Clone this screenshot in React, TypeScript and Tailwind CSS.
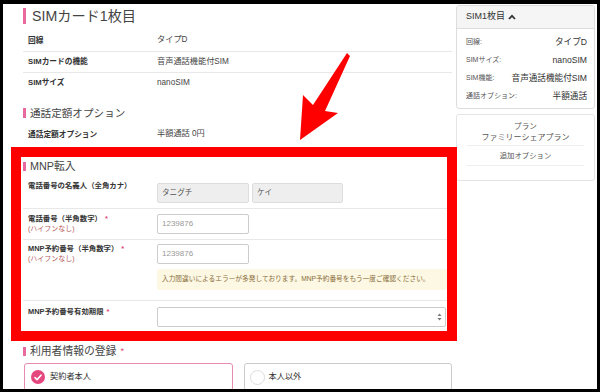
import React from "react";

function Bar({ h }: { h: string }) {
  return <span className={"block w-[3px] bg-[#e8699e] shrink-0 " + h} />;
}

function InfoRow({ label, value, top }: { label: string; value: string; top?: boolean }) {
  return (
    <div className={"flex items-center h-[21px] " + (top ? "border-t border-[#e8e8e8]" : "")}>
      <div className="w-[134px] pl-[5px] text-[7.7px] font-bold text-[#333]">{label}</div>
      <div className="text-[8.2px] text-[#444]">{value}</div>
    </div>
  );
}

function SideRow({ label, value }: { label: string; value: string }) {
  return (
    <div className="flex items-center justify-between h-[18px]">
      <span className="text-[7px] text-[#555]">{label}</span>
      <span className="text-[8.6px] text-[#333]">{value}</span>
    </div>
  );
}

export default function App() {
  return (
    <div className="w-[600px] h-[392px] bg-black pt-[4px] pl-[3px] pr-[3px] pb-[3px] [font-family:'Liberation_Sans','Noto_Sans_CJK_JP',sans-serif]">
      <div className="relative w-full h-full bg-white overflow-hidden flex">
        {/* main column */}
        <div className="w-[453px] shrink-0 pl-[20px] pr-[4px]">
          <div className="h-[24px] flex items-center">
            <Bar h="h-[16px]" />
            <span className="ml-[6px] text-[14.2px] leading-none text-[#444]">SIMカード1枚目</span>
          </div>
          <div className="mt-[2px]">
            <InfoRow label="回線" value="タイプD" />
            <InfoRow label="SIMカードの機能" value="音声通話機能付SIM" top />
            <InfoRow label="SIMサイズ" value="nanoSIM" top />
          </div>

          <div className="mt-[10px] h-[20px] flex items-center">
            <Bar h="h-[10px]" />
            <span className="ml-[4px] text-[10.6px] leading-none text-[#444]">通話定額オプション</span>
          </div>
          <div className="mt-[1px]">
            <InfoRow label="通話定額オプション" value="半額通話 0円" />
          </div>

          <div className="mt-[11px] h-[20px] flex items-center">
            <Bar h="h-[9px]" />
            <span className="ml-[4px] text-[10.8px] leading-none text-[#444]">MNP転入</span>
          </div>

          {/* MNP row 1 */}
          <div className="flex h-[32px] pt-[7px]">
            <div className="w-[134px] pl-[5px] -mt-[2px] text-[7.4px] leading-[10px] font-bold text-[#333]">
              電話番号の名義人（全角カナ）
            </div>
            <div className="flex gap-[3px]">
              <div className="w-[92px] h-[20px] bg-[#eeeeee] border border-[#dddddd] rounded-[2px] pl-[4px] flex items-center text-[7.6px] text-[#555]">
                タニグチ
              </div>
              <div className="w-[91px] h-[20px] bg-[#eeeeee] border border-[#dddddd] rounded-[2px] pl-[4px] flex items-center text-[7.6px] text-[#555]">
                ケイ
              </div>
            </div>
          </div>

          {/* MNP row 2 */}
          <div className="flex h-[31px] pt-[5px] border-t border-[#e8e8e8]">
            <div className="w-[134px] pl-[5px]">
              <div className="text-[7.4px] leading-[10px] font-bold text-[#333]">
                電話番号（半角数字）<span className="ml-[3px] text-[#e0457b]">*</span>
              </div>
              <div className="text-[7px] leading-[10px] text-[#b35a5a]">(ハイフンなし)</div>
            </div>
            <div className="w-[92px] h-[20px] bg-white border border-[#cccccc] rounded-[2px] pl-[4px] flex items-center text-[8px] text-[#999]">
              1239876
            </div>
          </div>

          {/* MNP row 3 */}
          <div className="flex h-[61px] pt-[4px] border-t border-[#e8e8e8]">
            <div className="w-[134px] pl-[5px] shrink-0">
              <div className="text-[7.4px] leading-[10px] font-bold text-[#333]">
                MNP予約番号（半角数字）<span className="ml-[3px] text-[#e0457b]">*</span>
              </div>
              <div className="text-[7px] leading-[10px] text-[#b35a5a]">(ハイフンなし)</div>
            </div>
            <div className="flex-1">
              <div className="w-[92px] h-[20px] bg-white border border-[#cccccc] rounded-[2px] pl-[4px] flex items-center text-[8px] text-[#999]">
                1239876
              </div>
              <div className="mt-[5px] w-[290px] h-[21px] bg-[#fcf8e3] rounded-[2px] pl-[5px] flex items-center text-[6.7px] text-[#8a6d3b] whitespace-nowrap">
                入力間違いによるエラーが多発しております。MNP予約番号をもう一度ご確認ください。
              </div>
            </div>
          </div>

          {/* MNP row 4 */}
          <div className="flex h-[33px] pt-[6px] border-t border-[#e8e8e8]">
            <div className="w-[134px] pl-[5px] shrink-0 text-[7.4px] leading-[10px] font-bold text-[#333]">
              MNP予約番号有効期限<span className="ml-[3px] text-[#e0457b]">*</span>
            </div>
            <div className="w-[289px] h-[20px] bg-white border border-[#cccccc] rounded-[2px] flex items-center justify-end pr-[3px]">
              <svg width="5" height="8" viewBox="0 0 5 8">
                <path d="M2.5 0.5 L4.5 3 L0.5 3 Z" fill="#777" />
                <path d="M2.5 7.5 L4.5 5 L0.5 5 Z" fill="#777" />
              </svg>
            </div>
          </div>

          <div className="mt-[8px] h-[20px] flex items-center">
            <Bar h="h-[9px]" />
            <span className="ml-[4px] text-[10.8px] leading-none text-[#444]">利用者情報の登録</span>
            <span className="ml-[4px] text-[9px] leading-none text-[#e0457b]">*</span>
          </div>
          <div className="mt-[2px] ml-[1px] grid grid-cols-2 gap-[11px]">
            <div className="h-[28px] border border-[#e88bb0] rounded-[3px] flex items-center pl-[6px]">
              <span className="w-[14px] h-[14px] rounded-full bg-[#e5487f] flex items-center justify-center">
                <svg width="8" height="7" viewBox="0 0 8 7">
                  <path d="M1 3.6 L3.1 5.6 L7 1.2" stroke="white" strokeWidth="1.6" fill="none" strokeLinecap="round" strokeLinejoin="round" />
                </svg>
              </span>
              <span className="ml-[5px] text-[8.2px] text-[#333]">契約者本人</span>
            </div>
            <div className="h-[28px] border border-[#cccccc] rounded-[3px] flex items-center pl-[5px]">
              <span className="w-[15px] h-[15px] rounded-full border border-[#dddddd] bg-white" />
              <span className="ml-[4px] text-[8.2px] text-[#333]">本人以外</span>
            </div>
          </div>
        </div>

        {/* sidebar */}
        <div className="w-[139px] shrink-0 pt-[1px]">
          <div className="border border-[#dddddd] rounded-[3px] overflow-hidden">
            <div className="h-[23px] bg-[#f5f5f5] border-b border-[#dddddd] px-[9px] flex items-center gap-[3px]">
              <span className="text-[9px] text-[#333]">SIM1枚目</span>
              <svg width="8" height="6" viewBox="0 0 8 6">
                <path d="M1 5 L4 1.8 L7 5" stroke="#333" strokeWidth="1.8" fill="none" />
              </svg>
            </div>
            <div className="pt-[4px] pb-[3px] pl-[9px] pr-[7px]">
              <SideRow label="回線:" value="タイプD" />
              <SideRow label="SIMサイズ:" value="nanoSIM" />
              <SideRow label="SIM機能:" value="音声通話機能付SIM" />
              <SideRow label="通話オプション:" value="半額通話" />
            </div>
          </div>
          <div className="mt-[5px] border border-[#e4e4e4] rounded-[3px] pt-[6px] pb-[14px]">
            <div className="text-center text-[7.6px] leading-[11px] text-[#555]">プラン</div>
            <div className="text-center text-[8px] leading-[11px] text-[#555]">ファミリーシェアプラン</div>
            <div className="mx-[10px] mt-[2px] border-t border-b border-[#eeeeee] h-[21px] flex items-center justify-center text-[7.4px] text-[#555]">
              追加オプション
            </div>
          </div>
        </div>

        {/* annotations */}
        <div className="absolute left-[8px] top-[143px] w-[446px] h-[194px] border-[10px] border-[#ff0000] pointer-events-none" />
        <svg className="absolute left-0 top-0 pointer-events-none" width="594" height="385" viewBox="3 4 594 385">
          <polygon points="347,53 350,56 325,111 338,113 300,140 303,95 313,105" fill="#ff0000" />
        </svg>
      </div>
    </div>
  );
}
